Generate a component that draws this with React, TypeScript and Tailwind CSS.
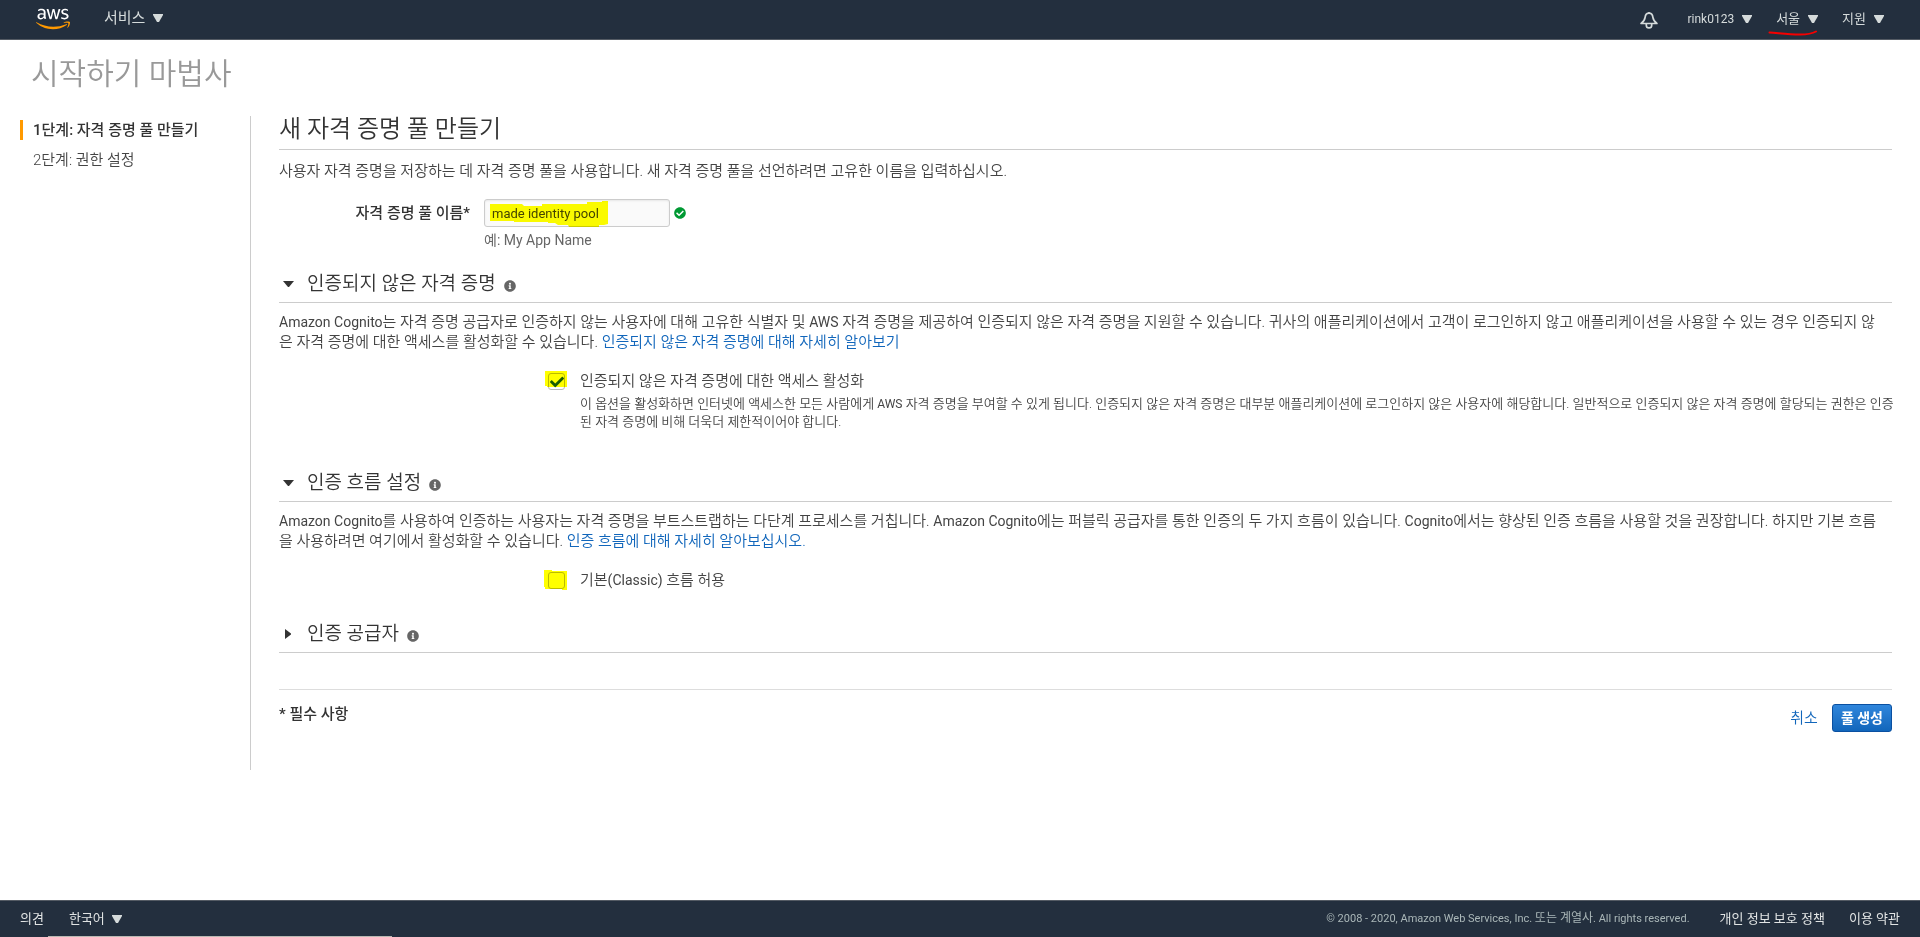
import { useState } from "react";
import type { ReactNode } from "react";
import { FaAws, FaCheck, FaCheckCircle, FaInfoCircle } from "react-icons/fa";

function MenuArrow() {
  return (
    <svg width="10" height="8" viewBox="0 0 10 8" className="fill-[#d5dbdb]" aria-hidden="true">
      <path d="M0 0h10v1L6 8H4L0 1z" />
    </svg>
  );
}

function BellIcon() {
  return (
    <svg
      width="18"
      height="18"
      viewBox="0 0 18 18"
      fill="none"
      stroke="currentColor"
      strokeWidth="1.7"
      strokeLinejoin="round"
      aria-hidden="true"
    >
      <path d="M9 1v1.500M9 2.200c-2.300 0-3.600 1.600-3.900 4.200-.3 2.500-1.500 4.200-4 6.100h15.800c-2.500-1.900-3.700-3.600-4-6.100-.3-2.600-1.600-4.200-3.900-4.200z" />
      <path d="M6.300 12.700v1.500a2.700 2.700 0 0 0 5.400 0v-1.500" />
    </svg>
  );
}

function Logo() {
  return (
    <a href="#" aria-label="AWS" className="flex w-[34px]">
      <svg width="0" height="0" className="absolute" aria-hidden="true">
        <defs>
          <linearGradient id="aws-fill" x1="0" y1="0" x2="0" y2="1">
            <stop offset="0.61" stopColor="#ffffff" />
            <stop offset="0.61" stopColor="#ff9900" />
          </linearGradient>
        </defs>
      </svg>
      <FaAws size={34} fill="url(#aws-fill)" strokeWidth="0" />
    </a>
  );
}

function Header() {
  return (
    <header className="flex h-10 items-center border-b border-[#545b64] bg-[#232f3e] px-9 pb-[2px] text-[13px] text-[#d5dbdb]">
      <Logo />
      <button className="ml-[34px] flex items-center gap-2 pb-[2px] text-[15px]">
        서비스 <MenuArrow />
      </button>
      <nav className="ml-auto flex items-center">
        <button aria-label="알림" className="mt-[2px] mr-[29px]">
          <BellIcon />
        </button>
        <button className="mr-6 flex items-center gap-2 text-[12px]">
          rink0123 <MenuArrow />
        </button>
        <button className="relative mr-6 flex items-center gap-2">
          서울 <MenuArrow />
          <svg
            width="50"
            height="6"
            viewBox="0 0 50 6"
            className="absolute top-full -left-2 mt-px"
            fill="none"
            stroke="#f60000"
            strokeWidth="2"
            strokeLinecap="round"
            aria-hidden="true"
          >
            <path d="M1.500 2.500C10 3 20 4.500 32 4.500c8 0 12-.7 16-3" />
          </svg>
        </button>
        <button className="flex items-center gap-2">
          지원 <MenuArrow />
        </button>
      </nav>
    </header>
  );
}

function Sidebar() {
  return (
    <nav className="w-[231px] shrink-0 border-r border-[#ccc] pt-1">
      <ol>
        <li className="flex h-5 items-center border-l-3 border-[#f90] pl-[10px] font-medium text-[#333]">
          1단계: 자격 증명 풀 만들기
        </li>
        <li className="mt-[10px] flex h-5 items-center pl-[13px]">2단계: 권한 설정</li>
      </ol>
    </nav>
  );
}

// Latin words sit one step smaller than the Hangul around them
function Latin({ children }: { children: ReactNode }) {
  return <span className="text-[14px] font-normal">{children}</span>;
}

interface SectionProps {
  title: string;
  defaultOpen?: boolean;
  children?: ReactNode;
}

function Section({ title, defaultOpen = false, children }: SectionProps) {
  const [open, setOpen] = useState(defaultOpen);

  return (
    <section>
      <h3 className="flex h-[37px] items-center border-b border-[#ccc] pb-px text-[19px] text-[#333]">
        <button className="flex items-center" aria-expanded={open} onClick={() => setOpen(!open)}>
          <span className="flex w-7 pl-1">
            <svg width="11" height="10" viewBox="0 0 11 10" className="fill-[#333]" aria-hidden="true">
              <path d={open ? "M0 2h11L6 8H5z" : "M2 0v10l6-4.500v-1z"} />
            </svg>
          </span>
          {title}
        </button>
        <FaInfoCircle className="mt-1 ml-2 text-[#666]" size={12} />
      </h3>
      {open && children}
    </section>
  );
}

interface OptionProps {
  id: string;
  label: ReactNode;
  defaultChecked?: boolean;
  marker: string;
  children?: ReactNode;
}

function Option({ id, label, defaultChecked, marker, children }: OptionProps) {
  return (
    <div className="mt-[19px] flex pl-[269px]">
      <span className="relative mt-[2px] h-[17px] w-8 shrink-0">
        <input
          id={id}
          type="checkbox"
          defaultChecked={defaultChecked}
          className="peer block size-[17px] appearance-none rounded-[3px] border border-[#bbb] bg-white"
        />
        <FaCheck
          size={14}
          className="pointer-events-none absolute top-[2px] left-[2px] hidden text-[#1b5e20] peer-checked:block"
        />
        <svg
          width="24"
          height="20"
          viewBox="0 0 24 20"
          className="pointer-events-none absolute -top-[2px] -left-1 fill-[#ffff00] mix-blend-multiply"
          aria-hidden="true"
        >
          <path d={marker} />
        </svg>
      </span>
      <div className="min-w-0 flex-1">
        <label htmlFor={id} className="block">
          {label}
        </label>
        {children}
      </div>
    </div>
  );
}

function Footer() {
  return (
    <footer className="mt-auto border-t border-[#545b64] bg-[#232f3e] text-[13px] text-[#e1e4e4]">
      <div className="flex h-[35px] items-center px-5">
        <a href="#">의견</a>
        <button className="ml-[25px] flex items-center gap-[7px]">
          한국어 <MenuArrow />
        </button>
        <span className="ml-auto text-[11px] text-[#aab7b8]">
          © 2008 - 2020, Amazon Web Services, Inc. <span className="text-[12px]">또는 계열사</span>. All rights reserved.
        </span>
        <a href="#" className="ml-[30px]">
          개인 정보 보호 정책
        </a>
        <a href="#" className="ml-6">
          이용 약관
        </a>
      </div>
      <div className="ml-12 h-px w-[344px] bg-[#b9b9b3]" />
    </footer>
  );
}

export default function App() {
  return (
    <div className="flex min-h-screen flex-col bg-white font-[Roboto,'Noto_Sans_CJK_KR',sans-serif] text-[15px] leading-5 text-[#444]">
      <Header />
      <h1 className="mt-[14px] pl-[31px] text-[30px] leading-10 font-[350] text-[#999]">시작하기 마법사</h1>
      <div className="mt-[22px] flex pr-7 pl-5 font-[350]">
        <Sidebar />
        <main className="min-w-0 flex-1 pb-[38px] pl-7">
          <h2 className="h-[34px] border-b border-[#ccc] text-[24px] leading-[26px] text-[#333]">새 자격 증명 풀 만들기</h2>
          <p className="mt-[11px]">
            사용자 자격 증명을 저장하는 데 자격 증명 풀을 사용합니다. 새 자격 증명 풀을 선언하려면 고유한 이름을 입력하십시오.
          </p>
          <div className="mt-[18px] flex">
            <label htmlFor="pool-name" className="w-[191px] pt-1 text-right font-medium text-[#333]">
              자격 증명 풀 이름*
            </label>
            <div className="ml-[14px] font-normal">
              <div className="relative flex items-center gap-1">
                <input
                  id="pool-name"
                  defaultValue="made identity pool"
                  className="h-7 w-[186px] rounded-[3px] border border-[#ccc] bg-[#fafafa] px-[7px] text-[13px] text-[#444] shadow-[inset_0_1px_2px_rgba(0,0,0,0.08)]"
                />
                <FaCheckCircle size={12} className="text-[#093]" />
                <svg
                  width="120"
                  height="27"
                  viewBox="0 0 120 27"
                  className="pointer-events-none absolute top-px left-[5px] fill-[#ffff00] mix-blend-multiply"
                  aria-hidden="true"
                >
                  <path d="M1 4L33 4l2 2h18V4h45V2h15V1h6v23l-4 1h-5v2H80l-1-2H69l-3-2h-7v-1H25v-1H1z" />
                </svg>
              </div>
              <p className="mt-[3px] text-[14px] text-[#666]">예: My App Name</p>
            </div>
          </div>
          <div className="mt-4">
            <Section title="인증되지 않은 자격 증명" defaultOpen>
              <p className="mt-[9px] pr-1">
                <Latin>Amazon Cognito</Latin>는 자격 증명 공급자로 인증하지 않는 사용자에 대해 고유한 식별자 및 <Latin>AWS</Latin> 자격 증명을
                제공하여 인증되지 않은 자격 증명을 지원할 수 있습니다. 귀사의 애플리케이션에서 고객이 로그인하지 않고 애플리케이션을 사용할 수
                있는 경우 인증되지 않은 자격 증명에 대한 액세스를 활성화할 수 있습니다.{" "}
                <a href="#" className="text-[#1166bb]">
                  인증되지 않은 자격 증명에 대해 자세히 알아보기
                </a>
              </p>
              <Option
                id="unauth-access"
                label="인증되지 않은 자격 증명에 대한 액세스 활성화"
                defaultChecked
                marker="M1 0h22v16H3v-1H1z"
              >
                <p className="mt-1 -mr-2 text-[13px] leading-[18px]">
                  이 옵션을 활성화하면 인터넷에 액세스한 모든 사람에게 <span className="text-[12px] font-normal">AWS</span> 자격 증명을 부여할
                  수 있게 됩니다. 인증되지 않은 자격 증명은 대부분 애플리케이션에 로그인하지 않은 사용자에 해당합니다. 일반적으로 인증되지 않은
                  자격 증명에 할당되는 권한은 인증된 자격 증명에 비해 더욱더 제한적이어야 합니다.
                </p>
              </Option>
            </Section>
          </div>
          <div className="mt-[34px]">
            <Section title="인증 흐름 설정" defaultOpen>
              <p className="mt-[9px] pr-1">
                <Latin>Amazon Cognito</Latin>를 사용하여 인증하는 사용자는 자격 증명을 부트스트랩하는 다단계 프로세스를 거칩니다.{" "}
                <Latin>Amazon Cognito</Latin>에는 퍼블릭 공급자를 통한 인증의 두 가지 흐름이 있습니다. <Latin>Cognito</Latin>에서는 향상된 인증
                흐름을 사용할 것을 권장합니다. 하지만 기본 흐름을 사용하려면 여기에서 활성화할 수 있습니다.{" "}
                <a href="#" className="text-[#1166bb]">
                  인증 흐름에 대해 자세히 알아보십시오.
                </a>
              </p>
              <Option
                id="classic-flow"
                label={
                  <>
                    기본<Latin>(Classic)</Latin> 흐름 허용
                  </>
                }
                marker="M0 0h8v1h15v19h-5v-1H1v-2H0z"
              />
            </Section>
          </div>
          <div className="mt-[26px]">
            <Section title="인증 공급자" />
          </div>
          <div className="mt-9 flex justify-between border-t border-[#ddd] pt-[14px]">
            <span className="font-medium text-[#333]">* 필수 사항</span>
            <div className="flex items-center gap-[14px]">
              <a href="#" className="text-[#1166bb]">
                취소
              </a>
              <button className="h-7 rounded-[3px] border border-[#0a50a1] bg-linear-to-b from-[#2f86dc] to-[#1166bb] px-2 text-[14px] font-bold text-white">
                풀 생성
              </button>
            </div>
          </div>
        </main>
      </div>
      <Footer />
    </div>
  );
}
